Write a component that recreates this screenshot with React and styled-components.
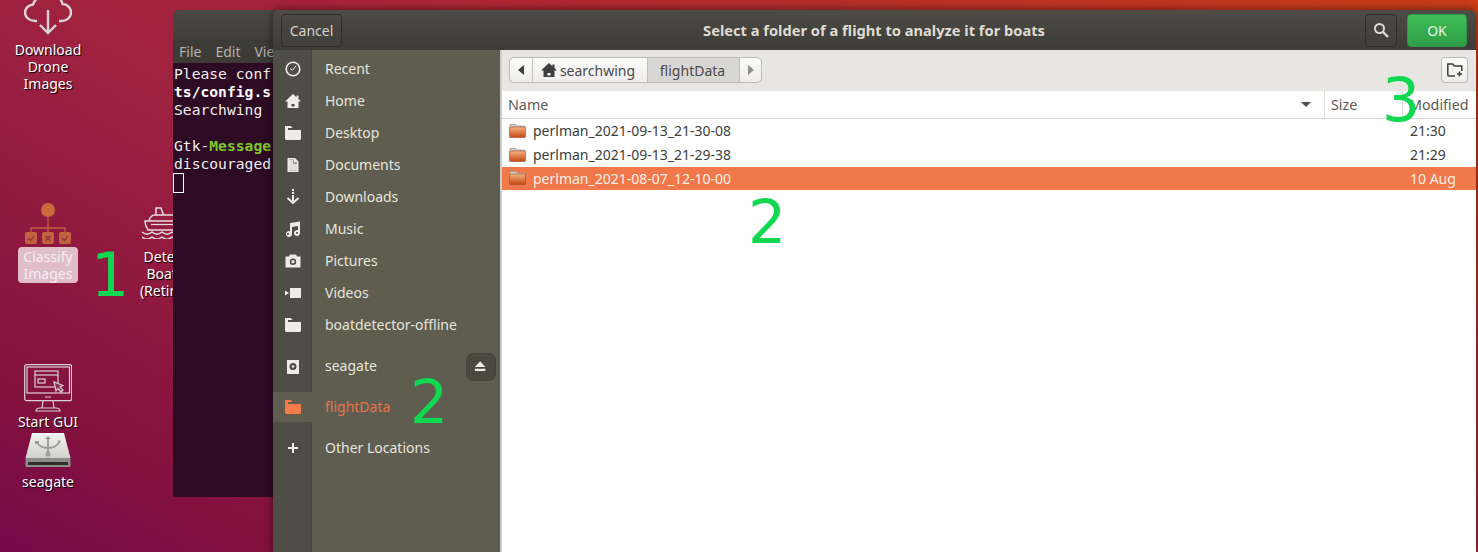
import React from "react";
import styled, { createGlobalStyle } from "styled-components";

const SANS = `"Noto Sans", "Open Sans", sans-serif`;

const GlobalStyle = createGlobalStyle`
  html, body {
    margin: 0;
    height: 100%;
    overflow: hidden;
  }
  body {
    font-family: ${SANS};
  }
`;

const Desktop = styled.div`
  position: relative;
  width: 1478px;
  height: 552px;
  overflow: hidden;
  background: linear-gradient(30deg, #760a4a 0%, #82103f 11%, #9e2240 39%, #a5223b 50%, #cb3d17 100%);
`;

/* desktop icons */
const DesktopItem = styled.div`
  position: absolute;
  left: ${(p) => p.$x - 45}px;
  top: ${(p) => p.$y}px;
  width: 90px;
  display: flex;
  flex-direction: column;
  align-items: center;
`;

const DesktopLabel = styled.div`
  margin-top: ${(p) => p.$gap || 0}px;
  padding: 1px 5px;
  border-radius: 4px;
  font-size: 14px;
  line-height: 17px;
  text-align: center;
  color: ${(p) => (p.$selected ? "#f5edf0" : "#fff")};
  background: ${(p) => (p.$selected ? "rgba(255,255,255,.72)" : "transparent")};
  text-shadow: ${(p) => (p.$selected ? "none" : "1px 1px 1px #000")};
`;

const CloudIcon = () => (
  <svg width="48" height="40" viewBox="0 0 48 40" fill="none" stroke="#dcd3d6" strokeWidth="2.4">
    <path d="M13 25h-2C5 25 1 21 1 16.500S5 9 9 8.500C11 3 15 -1 24 -3c8 0 13 5 14.500 11 5 0 8.500 4 8.500 8.500S43 25 38 25h-3" />
    <path d="M24 14v23M16 29l8 8 8-8" />
  </svg>
);

const ClassifyIcon = () => (
  <svg width="46" height="42" viewBox="0 0 46 42">
    <circle cx="23" cy="7" r="7" fill="#c96a3c" />
    <path d="M23 13v17M6 30v-5h34v5" fill="none" stroke="#c2633f" strokeWidth="1.300" />
    <rect x="0" y="29" width="12" height="12" rx="2" fill="#c2633f" />
    <rect x="17" y="29" width="12" height="12" rx="2" fill="#c2633f" />
    <rect x="34" y="29" width="12" height="12" rx="2" fill="#c2633f" />
    <path d="M3 35l2.500 2.500L9 33M37 35l2.500 2.500L43 33" fill="none" stroke="#8c2c3a" strokeWidth="1.200" />
    <path d="M20.500 33l5 5M25.500 33l-5 5" stroke="#8c2c3a" strokeWidth="1.200" />
  </svg>
);

const ShipIcon = () => (
  <svg width="48" height="32" viewBox="0 0 48 32" fill="none" stroke="#e6dde0" strokeWidth="1.500">
    <path d="M15 8V1h5l2.500 7" />
    <path d="M8 14c1-4 3-6 6-6h22c3 0 5 2 6 6" />
    <path d="M4 14h40l-3 9H7c-2-3-3-6-3-9z" />
    <path d="M10 17.500h28" strokeWidth="1.200" />
    <path d="M1 25c4 3 6 3 10 0 4 3 6 3 10 0 4 3 6 3 10 0 4 3 6 3 10 0M1 30c4 3 6 3 10 0 4 3 6 3 10 0 4 3 6 3 10 0 4 3 6 3 10 0" />
  </svg>
);

const MonitorIcon = () => (
  <svg width="48" height="48" viewBox="0 0 48 48" fill="none" stroke="#dcd0d6" strokeWidth="1.200">
    <rect x="0.700" y="0.700" width="47" height="36" rx="2" />
    <rect x="3" y="3" width="42.500" height="26" />
    <rect x="11" y="7" width="23" height="16" />
    <path d="M11 11h23" />
    <rect x="14" y="15" width="7" height="4" />
    <path d="M30 18l2 9 2-2.500 3 3.500 2-2-3-3 3-1.500z" fill="#8e2a5a" />
    <path d="M19 37l-1 7M29 37l1 7M12 47c0-2 2-3 4-3h16c2 0 4 1 4 3zM21 33h6" />
  </svg>
);

const UsbDriveIcon = () => (
  <svg width="46" height="34" viewBox="0 0 46 34">
    <defs>
      <linearGradient id="driveTop" x1="0" y1="0" x2="0" y2="1">
        <stop offset="0" stopColor="#f4f4f2" />
        <stop offset="1" stopColor="#cfcfcc" />
      </linearGradient>
    </defs>
    <path d="M7 0h32l6.500 25H.500z" fill="url(#driveTop)" />
    <rect x="0.500" y="25" width="45" height="9" rx="1" fill="#8c8c8a" />
    <rect x="3" y="29" width="40" height="3" fill="#2e2e2c" />
    <path d="M23 4v17M12 9c2 5 7 6 11 6s9-1 11-6" fill="none" stroke="#9a9a96" strokeWidth="1.800" />
    <path d="M20 6l3-3 3 3zM10 8h4v3h-4zM33 7l3 1-2 3z" fill="#9a9a96" />
    <circle cx="23" cy="21" r="2.500" fill="#9a9a96" />
  </svg>
);

/* terminal behind the dialog */
const Terminal = styled.div`
  position: absolute;
  left: 173px;
  top: 10px;
  width: 300px;
  height: 487px;
  display: flex;
  flex-direction: column;
  border-radius: 6px 6px 0 0;
  overflow: hidden;
  background: #2e0b24;
`;

const TerminalTitle = styled.div`
  height: 30px;
  background: linear-gradient(#4a4944, #3f3e3a);
`;

const TerminalMenu = styled.div`
  height: 23px;
  display: flex;
  gap: 14px;
  padding-left: 6px;
  align-items: center;
  font-size: 14px;
  color: #b5b2aa;
  background: #3c3b37;
`;

const TerminalBody = styled.div`
  padding: 2px 1px;
  font-family: "DejaVu Sans Mono", monospace;
  font-size: 14.670px;
  line-height: 18px;
  white-space: pre;
  color: #eeeeec;
`;

const Strong = styled.b`
  color: #fff;
`;

const GreenStrong = styled.b`
  color: #7ec72a;
`;

const Cursor = styled.div`
  width: 11px;
  height: 20px;
  margin-left: -1px;
  border: 1px solid #fff;
  box-sizing: border-box;
`;

/* file chooser */
const Dialog = styled.div`
  position: absolute;
  left: 273px;
  top: 10px;
  width: 1203px;
  height: 542px;
  display: flex;
  flex-direction: column;
  border-radius: 6px 6px 0 0;
  overflow: hidden;
  box-shadow: 0 0 10px rgba(0, 0, 0, 0.55);
`;

const HeaderBar = styled.header`
  height: 40px;
  flex: none;
  display: grid;
  grid-template-columns: 1fr auto 1fr;
  align-items: center;
  padding: 0 9px 0 8px;
  background: linear-gradient(#4d4b45, #3d3c37);
`;

const Title = styled.div`
  margin-top: -1px;
  font-size: 14.650px;
  font-weight: 700;
  color: #dfdbd2;
`;

const HeaderRight = styled.div`
  display: flex;
  justify-content: flex-end;
  gap: 10px;
`;

const HeaderButton = styled.button`
  height: 33px;
  width: ${(p) => p.$width}px;
  padding: 0;
  display: flex;
  align-items: center;
  justify-content: center;
  justify-self: start;
  box-sizing: border-box;
  border: 1px solid ${(p) => (p.$suggested ? "#2d9a45" : "#2f2e2a")};
  border-radius: 4px;
  font-family: ${SANS};
  font-size: 14px;
  color: ${(p) => (p.$suggested ? "#e4f5e6" : "#d8d4ca")};
  background: ${(p) => (p.$suggested ? "linear-gradient(#3dbd54, #2f9e49)" : "linear-gradient(#4a4842, #403f3a)")};
`;

const DialogBody = styled.div`
  flex: 1;
  display: flex;
  min-height: 0;
`;

const Sidebar = styled.nav`
  width: 227px;
  flex: none;
  padding-top: 3px;
  box-sizing: border-box;
  background: linear-gradient(90deg, #4f4e46 38px, #46453d 38px, #46453d 39px, #5f5d50 39px);
`;

const SideRow = styled.div`
  height: ${(p) => p.$height}px;
  display: flex;
  align-items: center;
`;

const SideIcon = styled.div`
  width: 39px;
  align-self: stretch;
  flex: none;
  display: flex;
  align-items: center;
  justify-content: center;
  background: ${(p) => (p.$active ? "#5f5d50" : "transparent")};
`;

const SideLabel = styled.span`
  margin-left: 13px;
  margin-top: -2px;
  font-size: 14px;
  color: ${(p) => (p.$active ? "#e9734a" : "#e6e4dc")};
`;

const EjectButton = styled.div`
  width: 30px;
  height: 28px;
  margin-left: auto;
  margin-right: 4px;
  display: flex;
  align-items: center;
  justify-content: center;
  border-radius: 7px;
  background: #4a493f;
  border: 1px solid #45443b;
  box-sizing: border-box;
`;

const Pane = styled.main`
  flex: 1;
  display: flex;
  flex-direction: column;
  min-width: 0;
  border-left: 2px solid #cfcdc9;
  background: #fff;
`;

const PathBar = styled.div`
  height: 41px;
  flex: none;
  display: flex;
  align-items: center;
  justify-content: space-between;
  padding: 0 8px 1px 7px;
  box-sizing: border-box;
  background: #e8e6e3;
`;

const PathGroup = styled.div`
  display: flex;
  height: 26px;
  box-sizing: border-box;
  border: 1px solid #bdbab5;
  border-radius: 5px;
  overflow: hidden;
  background: linear-gradient(#fbfbfa, #eeedeb);
`;

const PathSegment = styled.div`
  width: ${(p) => p.$width}px;
  display: flex;
  align-items: center;
  justify-content: center;
  gap: 3px;
  padding-right: ${(p) => p.$nudge || 0}px;
  box-sizing: border-box;
  font-size: 14px;
  color: #4a4a4a;
  border-right: ${(p) => (p.$last ? "none" : "1px solid #c4c1bc")};
  background: ${(p) => (p.$pressed ? "#d9d7d4" : "transparent")};
`;

const NewFolderButton = styled.div`
  width: 27px;
  height: 26px;
  display: flex;
  align-items: center;
  justify-content: center;
  box-sizing: border-box;
  border: 1px solid #bdbab5;
  border-radius: 4px;
  background: linear-gradient(#fbfbfa, #eeedeb);
`;

const COLUMNS = "823px 78px 1fr";

const ListHeader = styled.div`
  height: 28px;
  flex: none;
  display: grid;
  grid-template-columns: ${COLUMNS};
  box-sizing: border-box;
  border-bottom: 1px solid #d6d4d1;
  background: #fff;
`;

const HeaderCell = styled.div`
  display: flex;
  align-items: center;
  justify-content: space-between;
  padding: 0 13px 0 6px;
  font-size: 14.300px;
  color: #5a5a58;
  border-right: ${(p) => (p.$last ? "none" : "1px solid #dedcd9")};
  white-space: nowrap;
`;

const SortArrow = styled.span`
  width: 0;
  height: 0;
  border-left: 5px solid transparent;
  border-right: 5px solid transparent;
  border-top: 5px solid #4d4d4d;
`;

const FileRow = styled.div`
  height: ${(p) => (p.$selected ? 23 : 24)}px;
  padding-bottom: 1px;
  box-sizing: border-box;
  display: grid;
  grid-template-columns: ${COLUMNS};
  align-items: center;
  font-size: 14px;
  color: ${(p) => (p.$selected ? "#fdeee6" : "#3d3d3d")};
  background: ${(p) => (p.$selected ? "#f1784a" : "transparent")};
`;

const NameCell = styled.div`
  display: flex;
  align-items: center;
  gap: 7px;
  padding-left: 7px;
`;

const DateCell = styled.div`
  grid-column: 3;
  padding-left: 7px;
`;

const Annotation = styled.div`
  position: absolute;
  left: ${(p) => p.$x}px;
  top: ${(p) => p.$y}px;
  font-family: "DejaVu Sans", sans-serif;
  font-size: 60px;
  line-height: 60px;
  color: #10d850;
`;

/* gtk symbolic icons */
const Sym = ({ size = 16, color = "#eeece6", children }) => (
  <svg width={size} height={size} viewBox="0 0 16 16" fill={color}>
    {children}
  </svg>
);

const FOLDER_D = "M0 1h6l1.500 2H3v2h13v8.500c0 .8-.7 1.500-1.500 1.500h-13C.7 15 0 14.300 0 13.500z";
const HOME_D = "M8 1L0 8.500h2.500V15h11V8.500H16l-2.500-2.400V2.500h-2v1.700zM6.500 11h3v2.500h-3z";

const icons = {
  recent: (
    <Sym>
      <circle cx="8" cy="8" r="6.800" fill="none" stroke="#eeece6" strokeWidth="1.600" />
      <path d="M5 7.500l2.500 1.800L11 5" fill="none" stroke="#eeece6" strokeWidth="1" />
    </Sym>
  ),
  home: (
    <Sym>
      <path fillRule="evenodd" d={HOME_D} />
    </Sym>
  ),
  desktop: (
    <Sym>
      <path d={FOLDER_D} />
    </Sym>
  ),
  documents: (
    <Sym>
      <path d="M2.500 1H10l3.500 3.500V15h-11zM4 2.500v11h8V5.500H9v-3z" fillRule="evenodd" />
      <path d="M4 2.500h4.500v4H12V13.500H4z" opacity=".92" />
    </Sym>
  ),
  downloads: (
    <Sym>
      <path d="M7 0h2v2H7zM7 3h2v2H7zM7 6h2v6H7z" />
      <path d="M2.500 9L8 14l5.500-5" fill="none" stroke="#eeece6" strokeWidth="2" />
    </Sym>
  ),
  music: (
    <Sym>
      <path d="M5 2l10-1.500V12a3 3 0 1 1-2-2.800V5L7 6v7a3 3 0 1 1-2-2.800zM4 13a1 1 0 1 0-2 0 1 1 0 0 0 2 0zm9-1a1 1 0 1 0-2 0 1 1 0 0 0 2 0z" />
    </Sym>
  ),
  pictures: (
    <Sym>
      <path d="M5 1.500h6l1 2h3.500v11H.5v-11H4zM8 5.500a3.200 3.200 0 1 0 0 6.400 3.200 3.200 0 0 0 0-6.400z" />
      <circle cx="8" cy="8.700" r="1.600" />
    </Sym>
  ),
  videos: (
    <Sym>
      <path d="M5 3h11v10H5zM0 5.500l4 2.500-4 2.500z" />
    </Sym>
  ),
  folder: (
    <Sym>
      <path d={FOLDER_D} />
    </Sym>
  ),
  disk: (
    <Sym>
      <path d="M2 1h12v14H2zM8 4a3.500 3.500 0 1 0 0 7 3.500 3.500 0 0 0 0-7z" />
      <circle cx="8" cy="7.500" r="1.300" />
    </Sym>
  ),
  current: (
    <Sym color="#f47a48">
      <path d={FOLDER_D} />
    </Sym>
  ),
  add: (
    <Sym>
      <path d="M7 3h2v4h4v2H9v4H7V9H3V7h4z" />
    </Sym>
  ),
};

const EjectIcon = () => (
  <Sym size={14}>
    <path d="M7 1.500l6 6.500H1zM1 10h12v2.500H1z" />
  </Sym>
);

const HomeGlyph = () => (
  <Sym size={16} color="#3f3f3f">
    <path fillRule="evenodd" d={HOME_D} />
  </Sym>
);

const Chevron = ({ right, color }) => (
  <svg width="6" height="10" viewBox="0 0 6 10" fill={color}>
    <path d={right ? "M0 0l6 5-6 5z" : "M6 0L0 5l6 5z"} />
  </svg>
);

const SearchIcon = () => (
  <svg width="16" height="16" viewBox="0 0 16 16" fill="none" stroke="#dedad0">
    <circle cx="6.500" cy="6.500" r="4.500" strokeWidth="2" />
    <path d="M10 10l5 5" strokeWidth="2.400" />
  </svg>
);

const NewFolderIcon = () => (
  <svg width="16" height="14" viewBox="0 0 16 14" fill="none" stroke="#3f3f3f" strokeWidth="1.500">
    <path d="M8 13H2c-.6 0-1.200-.6-1.200-1.200V1h5l1.500 2h7.500v5" />
    <path d="M12.500 8.500v5M10 11h5" />
  </svg>
);

const FileFolderIcon = () => (
  <svg width="17" height="14" viewBox="0 0 17 14">
    <defs>
      <linearGradient id="fileFolder" x1="0" y1="0" x2="0" y2="1">
        <stop offset="0" stopColor="#f3b27c" />
        <stop offset="1" stopColor="#c8481a" />
      </linearGradient>
    </defs>
    <path d="M1 .5h6l1.500 1.500H16v2H1z" fill="#d0cec9" stroke="#8e8c88" strokeWidth=".6" />
    <rect x=".5" y="3" width="16" height="10.500" rx="1" fill="url(#fileFolder)" stroke="#9c4a25" strokeWidth=".6" />
  </svg>
);

const places = [
  { key: "recent", label: "Recent" },
  { key: "home", label: "Home" },
  { key: "desktop", label: "Desktop" },
  { key: "documents", label: "Documents" },
  { key: "downloads", label: "Downloads" },
  { key: "music", label: "Music" },
  { key: "pictures", label: "Pictures" },
  { key: "videos", label: "Videos" },
  { key: "folder", label: "boatdetector-offline" },
  { key: "disk", label: "seagate", height: 51, eject: true },
  { key: "current", label: "flightData", height: 30, active: true },
  { key: "add", label: "Other Locations", height: 52 },
];

const files = [
  { name: "perlman_2021-09-13_21-30-08", date: "21:30" },
  { name: "perlman_2021-09-13_21-29-38", date: "21:29" },
  { name: "perlman_2021-08-07_12-10-00", date: "10 Aug", selected: true },
];

export default function App() {
  return (
    <Desktop>
      <GlobalStyle />

      <DesktopItem $x={48} $y={-4}>
        <CloudIcon />
        <DesktopLabel $gap={4}>
          Download
          <br />
          Drone
          <br />
          Images
        </DesktopLabel>
      </DesktopItem>
      <DesktopItem $x={48} $y={203}>
        <ClassifyIcon />
        <DesktopLabel $gap={2} $selected>
          Classify
          <br />
          Images
        </DesktopLabel>
      </DesktopItem>
      <DesktopItem $x={165} $y={207}>
        <ShipIcon />
        <DesktopLabel $gap={8}>
          Detect
          <br />
          Boats
          <br />
          (Retina)
        </DesktopLabel>
      </DesktopItem>
      <DesktopItem $x={48} $y={364}>
        <MonitorIcon />
        <DesktopLabel>Start GUI</DesktopLabel>
      </DesktopItem>
      <DesktopItem $x={48} $y={433}>
        <UsbDriveIcon />
        <DesktopLabel $gap={5}>seagate</DesktopLabel>
      </DesktopItem>

      <Terminal>
        <TerminalTitle />
        <TerminalMenu>
          <span>File</span>
          <span>Edit</span>
          <span>View</span>
        </TerminalMenu>
        <TerminalBody>
          Please conf
          {"\n"}
          <Strong>ts/config.s</Strong>
          {"\n"}
          Searchwing
          {"\n\n"}
          Gtk-<GreenStrong>Message</GreenStrong>
          {"\n"}
          discouraged
          <Cursor />
        </TerminalBody>
      </Terminal>

      <Dialog>
        <HeaderBar>
          <HeaderButton $width={61}>Cancel</HeaderButton>
          <Title>Select a folder of a flight to analyze it for boats</Title>
          <HeaderRight>
            <HeaderButton $width={32}>
              <SearchIcon />
            </HeaderButton>
            <HeaderButton $width={60} $suggested>
              OK
            </HeaderButton>
          </HeaderRight>
        </HeaderBar>

        <DialogBody>
          <Sidebar>
            {places.map((place) => (
              <SideRow key={place.label} $height={place.height || 32}>
                <SideIcon $active={place.active}>{icons[place.key]}</SideIcon>
                <SideLabel $active={place.active}>{place.label}</SideLabel>
                {place.eject && (
                  <EjectButton>
                    <EjectIcon />
                  </EjectButton>
                )}
              </SideRow>
            ))}
          </Sidebar>

          <Pane>
            <PathBar>
              <PathGroup>
                <PathSegment $width={23}>
                  <Chevron color="#3f3f3f" />
                </PathSegment>
                <PathSegment $width={115} $nudge={4}>
                  <HomeGlyph />
                  searchwing
                </PathSegment>
                <PathSegment $width={92} $nudge={2} $pressed>
                  flightData
                </PathSegment>
                <PathSegment $width={21} $last>
                  <Chevron right color="#8e8e8c" />
                </PathSegment>
              </PathGroup>
              <NewFolderButton>
                <NewFolderIcon />
              </NewFolderButton>
            </PathBar>

            <ListHeader>
              <HeaderCell>
                Name
                <SortArrow />
              </HeaderCell>
              <HeaderCell>Size</HeaderCell>
              <HeaderCell $last>Modified</HeaderCell>
            </ListHeader>

            {files.map((file) => (
              <FileRow key={file.name} $selected={file.selected}>
                <NameCell>
                  <FileFolderIcon />
                  {file.name}
                </NameCell>
                <DateCell>{file.date}</DateCell>
              </FileRow>
            ))}
          </Pane>
        </DialogBody>
      </Dialog>

      <Annotation $x={91} $y={245}>1</Annotation>
      <Annotation $x={748} $y={192}>2</Annotation>
      <Annotation $x={410} $y={372}>2</Annotation>
      <Annotation $x={1382} $y={70}>3</Annotation>
    </Desktop>
  );
}
